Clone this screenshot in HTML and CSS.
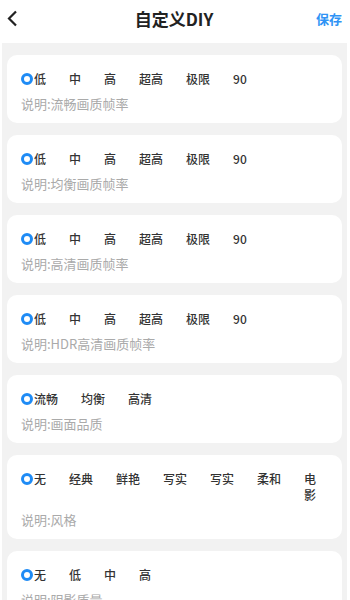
FILE: index.html
```html
<!DOCTYPE html>
<html>

<head>
  <meta charset="UTF-8" />
  <title>自定义DIY</title>
  <link rel="stylesheet" href="styles.css">
</head>

<body>
  <div class="header">
    <div class="back">
      <svg width="12" height="17" viewBox="0 0 12 17">
        <path d="M10 1.5 L3 8.5 L10 15.5" fill="none" stroke="#222" stroke-width="2.2" />
      </svg>
    </div>
    <div class="title">自定义DIY</div>
    <div class="save">保存</div>
  </div>

  <div class="list">
    <div class="card">
      <div class="options">
        <span class="opt checked">低</span>
        <span class="opt">中</span>
        <span class="opt">高</span>
        <span class="opt">超高</span>
        <span class="opt">极限</span>
        <span class="opt">90</span>
      </div>
      <div class="desc">说明:流畅画质帧率</div>
    </div>

    <div class="card">
      <div class="options">
        <span class="opt checked">低</span>
        <span class="opt">中</span>
        <span class="opt">高</span>
        <span class="opt">超高</span>
        <span class="opt">极限</span>
        <span class="opt">90</span>
      </div>
      <div class="desc">说明:均衡画质帧率</div>
    </div>

    <div class="card">
      <div class="options">
        <span class="opt checked">低</span>
        <span class="opt">中</span>
        <span class="opt">高</span>
        <span class="opt">超高</span>
        <span class="opt">极限</span>
        <span class="opt">90</span>
      </div>
      <div class="desc">说明:高清画质帧率</div>
    </div>

    <div class="card">
      <div class="options">
        <span class="opt checked">低</span>
        <span class="opt">中</span>
        <span class="opt">高</span>
        <span class="opt">超高</span>
        <span class="opt">极限</span>
        <span class="opt">90</span>
      </div>
      <div class="desc">说明:HDR高清画质帧率</div>
    </div>

    <div class="card">
      <div class="options">
        <span class="opt checked">流畅</span>
        <span class="opt">均衡</span>
        <span class="opt">高清</span>
      </div>
      <div class="desc">说明:画面品质</div>
    </div>

    <div class="card">
      <div class="options">
        <span class="opt checked">无</span>
        <span class="opt">经典</span>
        <span class="opt">鲜艳</span>
        <span class="opt">写实</span>
        <span class="opt">写实</span>
        <span class="opt">柔和</span>
        <span class="opt">电影</span>
      </div>
      <div class="desc">说明:风格</div>
    </div>

    <div class="card">
      <div class="options">
        <span class="opt checked">无</span>
        <span class="opt">低</span>
        <span class="opt">中</span>
        <span class="opt">高</span>
      </div>
      <div class="desc">说明:阴影质量</div>
    </div>
  </div>
</body>

</html>
```

FILE: styles.css
```css
body {
  margin: 0;
  background-color: #fff;
  font-family: "Noto Sans CJK SC", "Noto Sans", sans-serif;
  color: #333;
}

/* Header */
.header {
  height: 43px;
  display: flex;
  align-items: flex-start;
  justify-content: space-between;
  background-color: #fff;
}

.back,
.title,
.save {
  height: 36px;
  display: flex;
  align-items: center;
}

.back {
  width: 60px;
  padding-left: 6px;
}

.title {
  font-size: 17px;
  font-weight: bold;
  color: #222;
}

.save {
  width: 60px;
  justify-content: flex-end;
  padding-right: 8px;
  font-size: 13px;
  font-weight: bold;
  color: #2f93f5;
}

/* List */
.list {
  margin: 0 3px 0 2px;
  padding: 12px 5px 0;
  background-color: #f2f2f2;
  display: flex;
  flex-direction: column;
  gap: 12px;
}

.card {
  background-color: #fff;
  border-radius: 10px;
  padding: 16px 14px 11px 14px;
}

.options {
  display: flex;
  font-size: 12px;
  line-height: 16px;
  font-weight: 500;
  color: #333;
}

.opt {
  display: flex;
  flex-shrink: 0;
  margin-right: 23px;
}

.opt:last-child {
  flex-shrink: 1;
  min-width: 0;
}

.opt.checked::before {
  content: "";
  width: 6px;
  height: 6px;
  margin: 2px 1px 0 0;
  border: 3px solid #1e8bf5;
  border-radius: 50%;
  flex-shrink: 0;
}

.desc {
  margin-top: 9px;
  font-size: 13px;
  line-height: 16px;
  color: #aaa;
}
```
